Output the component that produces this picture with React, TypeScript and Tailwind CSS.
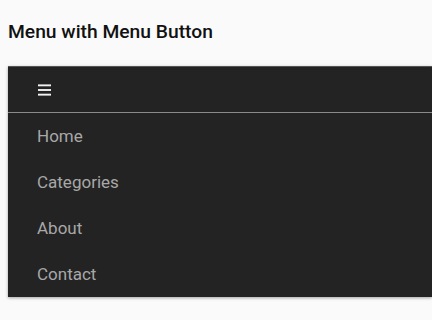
import React from "react";

export default function App() {
  const items = ["Home", "Categories", "About", "Contact"];
  return (
    <div className="w-[432px] h-[320px] overflow-hidden bg-[#fafafa]" style={{ fontFamily: "Roboto, 'Noto Sans', sans-serif" }}>
      <h1 className="pl-2 pt-[20px] h-[66px] text-[19.25px] leading-[24px] font-medium text-[#111]">Menu with Menu Button</h1>
      <div className="ml-2 w-[424px] bg-[#232323] border-t border-[#555] shadow-[0_1px_3px_rgba(0,0,0,0.35)]">
        <div className="h-[45px] flex items-center pl-[30px]">
          <svg width="13" height="12" viewBox="0 0 13 12" className="block">
            <rect x="0" y="0.4" width="13" height="1.9" fill="#f2f2f2" />
            <rect x="0" y="5.05" width="13" height="1.9" fill="#f2f2f2" />
            <rect x="0" y="9.7" width="13" height="1.9" fill="#f2f2f2" />
          </svg>
        </div>
        <div className="h-px bg-[#8a8a8a]" />
        {items.map((t) => (
          <div key={t} className="h-[46px] flex items-center pl-[29px] pt-[2px] text-[17px] text-[#a8a8a8]">
            {t}
          </div>
        ))}
      </div>
    </div>
  );
}
